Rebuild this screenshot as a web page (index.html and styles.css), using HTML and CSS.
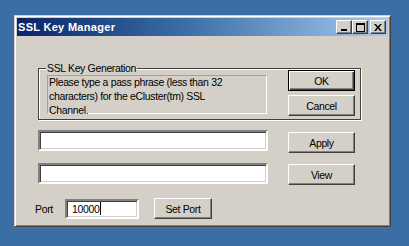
FILE: index.html
```html
<!DOCTYPE html>
<html lang="en">
<head>
    <meta charset="UTF-8">
    <meta name="viewport" content="width=device-width, initial-scale=1.0">
    <title>SSL Key Manager</title>
    <link rel="stylesheet" href="styles.css">
</head>
<body>
    <div class="window">
        <div class="titlebar">
            <span class="title">SSL Key Manager</span>
            <div class="caption-buttons">
                <button class="cap-btn" aria-label="Minimize">
                    <svg width="8" height="7" viewBox="0 0 8 7"><rect x="1" y="5" width="6" height="2" fill="#000"/></svg>
                </button>
                <button class="cap-btn" aria-label="Maximize">
                    <svg width="9" height="9" viewBox="0 0 9 9"><rect x="0.5" y="0.5" width="8" height="8" fill="none" stroke="#000"/><rect x="0" y="0" width="9" height="2" fill="#000"/></svg>
                </button>
                <button class="cap-btn close" aria-label="Close">
                    <svg width="8" height="7" viewBox="0 0 8 7"><path d="M0 0h2l2 2.5 2-2.5h2L5 3.5 8 7H6L4 4.5 2 7H0l3-3.5z" fill="#000"/></svg>
                </button>
            </div>
        </div>

        <div class="client">
            <div class="group">
                <span class="group-label">SSL Key Generation</span>
                <div class="info"><p>Please type a pass phrase (less than 32<br>characters) for the eCluster(tm) SSL<br>Channel.</p></div>
                <div class="button-col">
                    <button class="btn default">OK</button>
                    <button class="btn">Cancel</button>
                </div>
            </div>

            <div class="row">
                <input class="edit wide" type="text">
                <button class="btn side">Apply</button>
            </div>

            <div class="row second">
                <input class="edit wide" type="text">
                <button class="btn side view">View</button>
            </div>

            <div class="row port-row">
                <label class="port-label">Port</label>
                <div class="edit port"><span>10000</span><span class="caret"></span></div>
                <button class="btn set-port">Set Port</button>
            </div>
        </div>
    </div>
</body>
</html>
```

FILE: styles.css
```css
* {
    margin: 0;
    padding: 0;
    box-sizing: border-box;
}

body {
    background: #3a6ea5;
    font-family: "Liberation Sans", Arial, sans-serif;
    font-size: 10.5px;
    letter-spacing: -0.35px;
    color: #000;
    padding: 15px 0 0 14px;
    height: 246px;
    overflow: hidden;
}

.window {
    width: 377px;
    height: 212px;
    background: #d4d0c8;
    border: 1px solid;
    border-color: #d4d0c8 #404040 #404040 #d4d0c8;
    box-shadow: inset 1px 1px 0 #fff, inset -1px -1px 0 #808080;
    padding: 2px;
}

.titlebar {
    height: 18px;
    background: linear-gradient(to right, #0a246a 0%, #3a6ea5 45%, #a6caf0 100%);
    display: flex;
    align-items: center;
    justify-content: space-between;
    padding: 0 2px 0 1px;
}

.title {
    color: #fff;
    font-weight: bold;
    font-size: 11px;
    letter-spacing: 0.3px;
}

.caption-buttons {
    display: flex;
    align-items: center;
}

.cap-btn {
    width: 16px;
    height: 14px;
    background: #d4d0c8;
    border: 1px solid;
    border-color: #fff #404040 #404040 #fff;
    box-shadow: inset -1px -1px 0 #808080;
    display: flex;
    align-items: center;
    justify-content: center;
}

.cap-btn.close {
    margin-left: 2px;
}

.client {
    padding: 0 0 0 18px;
}

.group {
    position: relative;
    margin: 32px 0 0 3px;
    width: 323px;
    height: 52px;
    border: 1px solid #404040;
    box-shadow: 1px 1px 0 #fff, inset 1px 1px 0 #fff;
    display: flex;
    align-items: flex-start;
    padding: 1px 5px 0 8px;
}

.group-label {
    position: absolute;
    top: -7px;
    left: 7px;
    background: #d4d0c8;
    padding: 0 1px;
    line-height: 13px;
}

.info {
    width: 220px;
    height: 39px;
    margin-top: 5px;
    border: 1px solid;
    border-color: #a0a0a0 #fff #fff #a0a0a0;
    line-height: 14px;
    padding: 0 0 0 1px;
}

.info p {
    margin-top: -1px;
}

.button-col {
    margin-left: 21px;
    display: flex;
    flex-direction: column;
    gap: 4px;
}

.btn {
    width: 67px;
    height: 21px;
    background: #d4d0c8;
    font-family: inherit;
    font-size: inherit;
    letter-spacing: inherit;
    color: #000;
    border: 1px solid;
    border-color: #fff #404040 #404040 #fff;
    box-shadow: inset -1px -1px 0 #808080;
}

.btn.default {
    border-color: #000;
    box-shadow: inset 1px 1px 0 #fff, inset -1px -1px 0 #404040, inset -2px -2px 0 #808080;
}

.row {
    display: flex;
    align-items: flex-start;
    margin: 10px 0 0 3px;
}

.row.second {
    margin-top: 10px;
}

.edit {
    height: 21px;
    background: #fff;
    border: 2px solid;
    border-color: #808080 #fff #fff #808080;
    box-shadow: inset 1px 1px 0 #404040, inset -1px -1px 0 #d4d0c8;
    font-family: inherit;
    font-size: inherit;
}

.edit.wide {
    width: 230px;
}

.btn.side {
    margin: 2px 0 0 20px;
}

.btn.view {
    margin-top: 1px;
}

.port-row {
    margin: 13px 0 0 0;
    align-items: center;
}

.port-label {
    width: 30px;
}

.edit.port {
    width: 74px;
    height: 20px;
    display: flex;
    align-items: center;
    padding-left: 5px;
}

.caret {
    width: 1px;
    height: 13px;
    margin-left: 1px;
    background: #000;
}

.btn.set-port {
    width: 58px;
    margin-left: 15px;
}
```
